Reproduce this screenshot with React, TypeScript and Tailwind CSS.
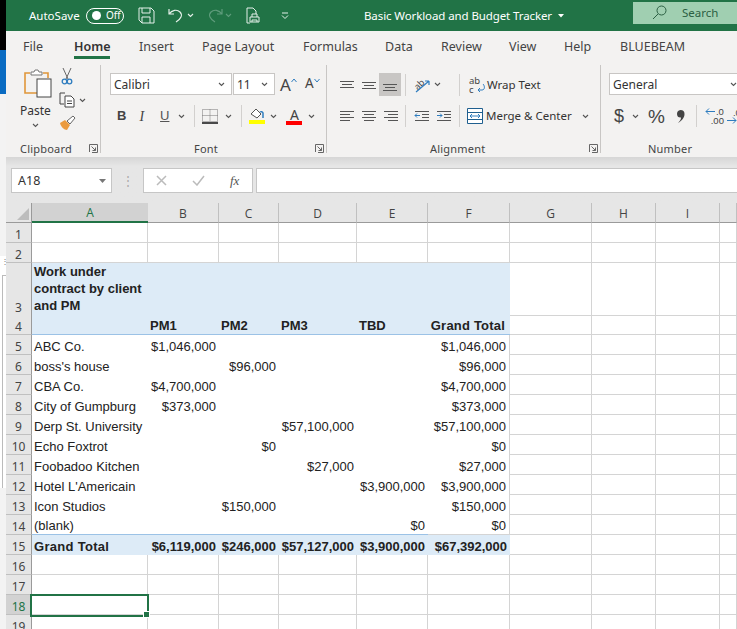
import React from "react";

/* ================= SHEET DATA ================= */

const columns = ["A", "B", "C", "D", "E", "F", "G", "H", "I", ""];

type Row = { n: number; cells: string[]; bold?: boolean };

const rows: Row[] = [
  { n: 5, cells: ["ABC Co.", "$1,046,000", "", "", "", "$1,046,000"] },
  { n: 6, cells: ["boss's house", "", "$96,000", "", "", "$96,000"] },
  { n: 7, cells: ["CBA Co.", "$4,700,000", "", "", "", "$4,700,000"] },
  { n: 8, cells: ["City of Gumpburg", "$373,000", "", "", "", "$373,000"] },
  { n: 9, cells: ["Derp St. University", "", "", "$57,100,000", "", "$57,100,000"] },
  { n: 10, cells: ["Echo Foxtrot", "", "$0", "", "", "$0"] },
  { n: 11, cells: ["Foobadoo Kitchen", "", "", "$27,000", "", "$27,000"] },
  { n: 12, cells: ["Hotel L'Americain", "", "", "", "$3,900,000", "$3,900,000"] },
  { n: 13, cells: ["Icon Studios", "", "$150,000", "", "", "$150,000"] },
  { n: 14, cells: ["(blank)", "", "", "", "$0", "$0"] },
];

const tabs = [
  { label: "File", w: "w-[51px]" },
  { label: "Home", w: "w-[65px]" },
  { label: "Insert", w: "w-[63px]" },
  { label: "Page Layout", w: "w-[101px]" },
  { label: "Formulas", w: "w-[82px]" },
  { label: "Data", w: "w-[56px]" },
  { label: "Review", w: "w-[68px]" },
  { label: "View", w: "w-[55px]" },
  { label: "Help", w: "w-[56px]" },
  { label: "BLUEBEAM", w: "w-[80px]" },
];

const sheetGrid = "grid grid-cols-[26px_116px_71px_60px_78px_71px_82px_82px_64px_64px_17px]";
const gridLine = "border-r border-b border-[#d4d4d4]";

/* ================= SMALL ICONS ================= */

function Chev({ className = "", color = "#555" }: { className?: string; color?: string }) {
  return (
    <svg width="7" height="5" viewBox="0 0 7 5" className={`shrink-0 ${className}`}>
      <path d="M1 1l2.5 2.5L6 1" fill="none" stroke={color} strokeWidth="1.1" />
    </svg>
  );
}

function Lines({ rows, arrow }: { rows: number[][]; arrow?: React.ReactNode }) {
  return (
    <svg width="16" height="14" viewBox="0 0 16 14" className="shrink-0">
      {rows.map((r, i) => (
        <line key={i} x1={r[0]} x2={r[1]} y1={r[2] + 0.5} y2={r[2] + 0.5} stroke="#555" />
      ))}
      {arrow}
    </svg>
  );
}

function Launcher({ className = "" }: { className?: string }) {
  return (
    <svg width="9" height="9" viewBox="0 0 9 9" className={`shrink-0 ${className}`}>
      <path d="M.5 8V.5H8.500V8.500H3" fill="none" stroke="#666" />
      <path d="M2.500 2.500L6.500 6.500M6.500 3.500V6.500H3.500" fill="none" stroke="#666" />
    </svg>
  );
}

function Sep({ className = "" }: { className?: string }) {
  return <div className={`w-px h-[22px] bg-[#d2d0ce] shrink-0 ${className}`} />;
}

function Combo({ label, w }: { label: string; w: string }) {
  return (
    <div className={`h-[22px] bg-white border border-[#c8c6c4] flex items-center justify-between pl-[3px] pr-[6px] pt-[1px] text-[12px] text-[#333] shrink-0 ${w}`}>
      <span>{label}</span>
      <Chev />
    </div>
  );
}

function GroupLabel({ label, className = "" }: { label: string; className?: string }) {
  return <span className={`text-[11px] leading-[8px] tracking-[0.2px] whitespace-nowrap text-[#444] ${className}`}>{label}</span>;
}

/* ================= APP ================= */

export default function App() {
  return (
    <div className="w-[737px] h-[629px] overflow-hidden flex bg-white font-['Noto_Sans',sans-serif] text-[#333]">

      {/* the window behind, just a sliver of it */}
      <div className="w-[6px] shrink-0 flex flex-col">
        <div className="h-[50px] bg-black" />
        <div className="h-[44px] bg-[#0a6bc2]" />
        <div className="h-[162px] bg-[#f3f3f3]" />
        <div className="h-[19px] bg-white text-[8px] leading-[7px] text-[#777] pl-[1px] pt-[1px]">⋮</div>
        <div className="h-[213px] bg-white border-t border-l border-[#bbb] ml-[2px]" />
        <div className="flex-1 bg-[#f3f3f3]" />
      </div>

      <div className="w-[731px] shrink-0 flex flex-col">

        {/* TITLE BAR */}
        <div className="h-[31px] bg-[#217346] flex items-center text-white shrink-0 pl-[23px]">
          <span className="text-[11.500px] w-[57px] shrink-0">AutoSave</span>
          <div className="w-[38px] h-[16px] rounded-full border border-white flex items-center pl-[5px] gap-[5px] shrink-0">
            <div className="w-[9px] h-[9px] rounded-full bg-white" />
            <span className="text-[10px]">Off</span>
          </div>
          <svg width="17" height="17" viewBox="0 0 17 17" className="ml-[14px] shrink-0">
            <path d="M1 1h12l3 3v12H4l-3-3z M4 1v5h8V1 M4 16v-6h8v6" fill="none" stroke="#e4f0e9" />
          </svg>
          <svg width="16" height="15" viewBox="0 0 16 15" className="ml-[13px] shrink-0">
            <path d="M1 1v5h5 M1 6c3-4 8-5 11-2s1 7-4 10" fill="none" stroke="#e4f0e9" strokeWidth="1.2" />
          </svg>
          <Chev className="ml-[3px]" color="#e4f0e9" />
          <svg width="16" height="15" viewBox="0 0 16 15" className="ml-[13px] shrink-0">
            <path d="M15 1v5h-5 M15 6c-3-4-8-5-11-2s-1 7 4 10" fill="none" stroke="#5f9c7c" strokeWidth="1.2" />
          </svg>
          <Chev className="ml-[2px]" color="#5f9c7c" />
          <svg width="15" height="17" viewBox="0 0 15 17" className="ml-[14px] shrink-0">
            <path d="M1 1h6l3 3v3 M1 1v15h3 M4 10h9v5H4z M6 10V7h5v3 M6 15v-2h5v2" fill="none" stroke="#e4f0e9" />
          </svg>
          <svg width="8" height="8" viewBox="0 0 8 8" className="ml-[20px] shrink-0">
            <path d="M1 1h6M1 3.500L4 6.500l3-3" fill="none" stroke="#e4f0e9" />
          </svg>
          <span className="text-[11.500px] ml-[75px] w-[185px] shrink-0 tracking-[-0.1px] whitespace-nowrap">Basic Workload and Budget Tracker</span>
          <svg width="6" height="4" viewBox="0 0 6 4" className="ml-[9px] shrink-0">
            <path d="M0 0h6L3 3.500z" fill="#fff" />
          </svg>
          <div className="ml-[69px] w-[104px] h-[22px] mb-[6px] bg-[#a0cfb1] flex items-center text-[#2b5f43] text-[11.500px] shrink-0">
            <svg width="15" height="15" viewBox="0 0 15 15" className="ml-[19px] shrink-0">
              <circle cx="9.500" cy="5.500" r="4.500" fill="none" stroke="#2b5f43" />
              <path d="M6 9l-5 5" stroke="#2b5f43" />
            </svg>
            <span className="ml-[15px]">Search</span>
          </div>
        </div>

        {/* TABS */}
        <div className="h-[31px] bg-[#f3f2f1] flex items-start pl-[17px] pt-[2px] text-[12.500px] text-[#444] shrink-0">
          {tabs.map((t) => (
            <div key={t.label} className={`${t.w} h-[28px] shrink-0 flex flex-col justify-center`}>
              <div className="relative w-fit">
                <span className={t.label === "Home" ? "font-semibold text-[#333]" : ""}>{t.label}</span>
                {t.label === "Home" && <div className="absolute left-0 right-0 -bottom-[3px] h-[3px] bg-[#217346]" />}
              </div>
            </div>
          ))}
        </div>

        {/* RIBBON */}
        <div className="h-[95px] bg-[#f3f2f1] flex shrink-0">

          {/* Clipboard */}
          <div className="w-[95px] h-[88px] mt-[3px] border-r border-[#c8c6c4] flex flex-col shrink-0">
            <div className="flex flex-1">
              <div className="w-[52px] pl-[18px] pt-[4px] flex flex-col items-start">
                <svg width="28" height="30" viewBox="0 0 28 30">
                  <path d="M13 24H1V4h5M19 4h5v5" fill="none" stroke="#e0963a" strokeWidth="1.600" />
                  <path d="M7 6V3h3l1-2h3l1 2h3v3z" fill="#fff" stroke="#777" />
                  <rect x="13" y="10" width="14" height="18" fill="#fff" stroke="#444" />
                </svg>
                <span className="text-[12px] -ml-[4px] mt-[3px]">Paste</span>
                <Chev className="ml-[8px] mt-[3px]" />
              </div>
              <div className="flex flex-col pl-[1px] pt-[2px] gap-[7px]">
                <svg width="12" height="18" viewBox="0 0 12 18" className="ml-[2px]">
                  <path d="M2 1l5 11M10 1L5 12" stroke="#666" fill="none" />
                  <circle cx="3.500" cy="14.500" r="2.300" fill="none" stroke="#2f7dbf" strokeWidth="1.300" />
                  <circle cx="8.500" cy="14.500" r="2.300" fill="none" stroke="#2f7dbf" strokeWidth="1.300" />
                </svg>
                <div className="flex items-center gap-[3px]">
                  <svg width="17" height="16" viewBox="0 0 17 16">
                    <path d="M6 1H1v11h4" fill="none" stroke="#444" />
                    <path d="M6 4h6l3 3v8H6z M8 9h5M8 11.500h5" fill="#fff" stroke="#444" />
                  </svg>
                  <Chev />
                </div>
                <svg width="17" height="16" viewBox="0 0 17 16">
                  <path d="M1 8l5-3 5 5-3 5C5 15 2 12 1 8z" fill="#eb9b3f" />
                  <path d="M8 6l6-5 2 2-5 6z" fill="#fff" stroke="#666" />
                </svg>
              </div>
            </div>
            <div className="h-[14px] flex items-end pl-[14px] justify-between pr-[2px]">
              <GroupLabel label="Clipboard" />
              <Launcher />
            </div>
          </div>

          {/* Font */}
          <div className="w-[226px] h-[88px] mt-[3px] border-r border-[#c8c6c4] flex flex-col shrink-0 pl-[9px]">
            <div className="flex items-center h-[22px] mt-[8px]">
              <Combo label="Calibri" w="w-[122px]" />
              <Combo label="11" w="w-[42px] ml-[1px]" />
              <span className="text-[17px] ml-[5px] text-[#444] leading-none">A</span>
              <svg width="6" height="5" viewBox="0 0 6 5" className="mb-[8px]"><path d="M.5 4L3 1l2.500 3" fill="none" stroke="#2f7dbf" /></svg>
              <span className="text-[13.500px] ml-[8px] text-[#444] leading-none">A</span>
              <svg width="6" height="5" viewBox="0 0 6 5" className="mb-[8px]"><path d="M.5 1L3 4l2.500-3" fill="none" stroke="#2f7dbf" /></svg>
            </div>
            <div className="flex items-center h-[22px] mt-[10px]">
              <span className="font-['Liberation_Sans',sans-serif] font-bold text-[13px] ml-[7px] text-[#444]">B</span>
              <span className="font-['Liberation_Serif',serif] italic text-[14px] ml-[13px] text-[#444]">I</span>
              <span className="font-['Liberation_Sans',sans-serif] text-[13px] underline ml-[16px] text-[#555]">U</span>
              <Chev className="ml-[9px]" />
              <Sep className="ml-[9px]" />
              <svg width="16" height="15" viewBox="0 0 16 15" className="ml-[7px] shrink-0">
                <path d="M.5 .5h15v12H.5z M8 .5v12M.5 6.500h15" fill="none" stroke="#777" strokeDasharray="1 1" />
                <path d="M0 14h16" stroke="#111" strokeWidth="1.500" />
              </svg>
              <Chev className="ml-[7px]" />
              <Sep className="ml-[9px]" />
              <div className="flex flex-col ml-[7px] w-[16px] shrink-0">
                <svg width="16" height="12" viewBox="0 0 16 12">
                  <path d="M2 6l5-5 5 5-4 4z" fill="#fff" stroke="#555" />
                  <path d="M14 10V5a2 2 0 0 0-3-1" fill="none" stroke="#2f7dbf" strokeWidth="1.500" />
                </svg>
                <div className="h-[4px] bg-[#ffff00]" />
              </div>
              <Chev className="ml-[5px]" />
              <div className="flex flex-col items-center ml-[9px] w-[16px] shrink-0">
                <span className="text-[14px] leading-[13px] text-[#444]">A</span>
                <div className="h-[4px] w-full bg-[#ff0000]" />
              </div>
              <Chev className="ml-[6px]" />
            </div>
            <div className="flex-1 flex items-end pr-[2px]">
              <GroupLabel label="Font" className="ml-[84px]" />
              <Launcher className="ml-auto" />
            </div>
          </div>

          {/* Alignment */}
          <div className="w-[274px] h-[88px] mt-[3px] border-r border-[#c8c6c4] flex flex-col shrink-0 pl-[12px]">
            <div className="flex items-center h-[23px] mt-[8px]">
              <Lines rows={[[1, 15, 3], [3, 13, 6], [1, 15, 9]]} />
              <div className="w-[6px]" />
              <Lines rows={[[1, 15, 4], [3, 13, 7], [1, 15, 10]]} />
              <div className="ml-[2px] w-[22px] h-[23px] bg-[#c8c6c4] flex items-center justify-center shrink-0">
                <Lines rows={[[1, 15, 6], [3, 13, 9], [1, 15, 12]]} />
              </div>
              <Sep className="ml-[4px]" />
              <span className="relative ml-[7px] w-[18px] h-[18px] shrink-0 block">
                <span className="block text-[9px] leading-[12px] -rotate-45 text-[#444]">ab</span>
                <svg width="18" height="18" viewBox="0 0 18 18" className="absolute left-0 top-0">
                  <path d="M3 16L16 5M16 5h-4M16 5v4" fill="none" stroke="#2f7dbf" strokeWidth="1.200" />
                </svg>
              </span>
              <Chev className="ml-[3px]" />
              <Sep className="ml-[18px]" />
              <span className="ml-[9px] w-[9px] text-[9.500px] leading-[9px] text-[#444] shrink-0">
                ab
                <br />
                c
              </span>
              <svg width="8" height="9" viewBox="0 0 8 9" className="mt-[7px] -ml-[1px] shrink-0">
                <path d="M6 0c2 2 2 6-1 6H1M3 4L1 6l2 2" fill="none" stroke="#2f7dbf" />
              </svg>
              <span className="ml-[2px] text-[11.500px] whitespace-nowrap">Wrap Text</span>
            </div>
            <div className="flex items-center h-[22px] mt-[9px]">
              <Lines rows={[[1, 15, 2], [1, 11, 5], [1, 15, 8], [1, 11, 11]]} />
              <div className="w-[6px]" />
              <Lines rows={[[1, 15, 2], [3, 13, 5], [1, 15, 8], [3, 13, 11]]} />
              <div className="w-[6px]" />
              <Lines rows={[[1, 15, 2], [5, 15, 5], [1, 15, 8], [5, 15, 11]]} />
              <Sep className="ml-[6px]" />
              <div className="ml-[8px]">
                <Lines
                  rows={[[1, 15, 2], [8, 15, 5], [8, 15, 8], [1, 15, 11]]}
                  arrow={<path d="M6 6.500H1M3 4.500L1 6.500l2 2" fill="none" stroke="#2f7dbf" />}
                />
              </div>
              <div className="ml-[6px]">
                <Lines
                  rows={[[1, 15, 2], [8, 15, 5], [8, 15, 8], [1, 15, 11]]}
                  arrow={<path d="M1 6.500h5M4 4.500l2 2-2 2" fill="none" stroke="#2f7dbf" />}
                />
              </div>
              <Sep className="ml-[7px]" />
              <svg width="16" height="16" viewBox="0 0 16 16" className="ml-[7px] shrink-0">
                <path d="M.5 .5h15v15H.5z M.5 4.500h15M.5 11.500h15" fill="#fff" stroke="#1f5f8f" />
                <path d="M3 8h10M5 6L3 8l2 2M11 6l2 2-2 2" fill="none" stroke="#2f7dbf" />
              </svg>
              <span className="ml-[3px] text-[11.500px] whitespace-nowrap">Merge &amp; Center</span>
              <Chev className="ml-[10px]" />
            </div>
            <div className="flex-1 flex items-end pr-[2px]">
              <GroupLabel label="Alignment" className="ml-[91px]" />
              <Launcher className="ml-auto" />
            </div>
          </div>

          {/* Number */}
          <div className="flex-1 h-[88px] mt-[3px] flex flex-col pl-[8px] overflow-hidden">
            <div className="mt-[8px] flex">
              <Combo label="General" w="w-[135px]" />
            </div>
            <div className="flex items-center h-[22px] mt-[10px] text-[#444]">
              <span className="text-[18px] ml-[5px] font-['Liberation_Sans',sans-serif] leading-none">$</span>
              <Chev className="ml-[8px]" />
              <span className="text-[19px] ml-[9px] font-['Liberation_Sans',sans-serif] leading-none">%</span>
              <svg width="9" height="13" viewBox="0 0 9 13" className="ml-[11px] shrink-0">
                <path d="M4.500 0a4 4 0 0 1 4 4c0 4-3 7-6.500 9 2-2 3-3.500 3-5.500a3.700 3.700 0 0 1-4-3.500A4 4 0 0 1 4.500 0z" fill="#444" />
              </svg>
              <Sep className="ml-[11px]" />
              <div className="ml-[7px] w-[20px] shrink-0 flex flex-col items-end text-[9.500px] leading-[9px] font-['Liberation_Sans',sans-serif]">
                <div className="flex items-center">
                  <svg width="10" height="7" viewBox="0 0 10 7" className="mr-[1px]"><path d="M10 3.500H1M4 .5L1 3.500l3 3" fill="none" stroke="#2f7dbf" /></svg>
                  <span>.0</span>
                </div>
                <span>.00</span>
              </div>
              <div className="ml-[3px] shrink-0 flex flex-col text-[9.500px] leading-[9px] font-['Liberation_Sans',sans-serif]">
                <span className="pl-[6px]">.00</span>
                <div className="flex items-center">
                  <svg width="10" height="7" viewBox="0 0 10 7"><path d="M0 3.500h9M6 .5l3 3-3 3" fill="none" stroke="#2f7dbf" /></svg>
                </div>
              </div>
            </div>
            <div className="flex-1 flex items-end">
              <GroupLabel label="Number" className="ml-[39px]" />
            </div>
          </div>
        </div>

        {/* FORMULA BAR */}
        <div className="h-[46px] shrink-0 bg-linear-to-b from-[#d6d6d6] to-[#e6e6e6] to-[20%] flex items-start pt-[11px] pl-[5px]">
          <div className="w-[101px] h-[25px] bg-white border border-[#c6c6c6] flex items-center justify-between pl-[6px] pr-[5px] pt-[1px] text-[12.500px] shrink-0">
            <span>A18</span>
            <svg width="7" height="4" viewBox="0 0 7 4"><path d="M0 0h7L3.500 4z" fill="#777" /></svg>
          </div>
          <div className="w-[31px] h-[25px] flex items-center justify-center text-[#aaa] text-[12px] shrink-0">⋮</div>
          <div className="w-[110px] h-[25px] bg-white border border-[#c6c6c6] flex items-center shrink-0">
            <svg width="11" height="11" viewBox="0 0 11 11" className="ml-[12px]">
              <path d="M1 1l9 9M10 1l-9 9" stroke="#bbb" strokeWidth="1.500" />
            </svg>
            <svg width="13" height="11" viewBox="0 0 13 11" className="ml-[25px]">
              <path d="M1 6l4 4 7-9" fill="none" stroke="#bbb" strokeWidth="1.500" />
            </svg>
            <span className="ml-[25px] font-['Liberation_Serif',serif] italic text-[13px] text-[#555]">fx</span>
          </div>
          <div className="flex-1 h-[25px] ml-[3px] bg-white border border-[#c6c6c6] border-r-0" />
        </div>

        {/* SHEET */}
        <div className="flex-1 font-['Liberation_Sans',sans-serif] text-[13px] leading-[15px] text-[#222] overflow-hidden">

          {/* column headers */}
          <div className={`${sheetGrid} h-[20px]`}>
            <div className="bg-[#e6e6e6] border-r border-b border-[#9a9a9a] flex items-end justify-end p-[2px]">
              <svg width="12" height="12" viewBox="0 0 12 12"><path d="M12 0v12H0z" fill="#bdbdbd" /></svg>
            </div>
            {columns.map((c, i) => (
              <div
                key={i}
                className={
                  i === 0
                    ? "bg-[#d2d2d2] border-b-2 border-[#217346] flex items-center justify-center pt-[1px] font-['Open_Sans',sans-serif] text-[12px] text-[#217346]"
                    : "bg-[#e6e6e6] border-r border-b border-r-[#c0c0c0] border-b-[#9a9a9a] flex items-center justify-center pt-[1px] font-['Open_Sans',sans-serif] text-[12px] text-[#444]"
                }
              >
                {c}
              </div>
            ))}
          </div>

          {/* rows 1 and 2, plain */}
          {[1, 2].map((n) => (
            <div key={n} className={`${sheetGrid} h-[20px]`}>
              <RowHead n={n} />
              {columns.map((c, i) => (
                <div key={i} className={gridLine} />
              ))}
            </div>
          ))}

          {/* row 3, the wrapped heading */}
          <div className={`${sheetGrid} h-[52px]`}>
            <RowHead n={3} />
            <div className="col-span-6 bg-[#ddebf7] font-bold leading-[17px] pl-[2px] flex items-end">
              <span className="w-[115px] pb-[2px]">Work under contract by client and PM</span>
            </div>
            {columns.slice(6).map((c, i) => (
              <div key={i} className={gridLine} />
            ))}
          </div>

          {/* row 4, pivot header */}
          <div className={`${sheetGrid} h-[20px]`}>
            <RowHead n={4} />
            <div className="bg-[#ddebf7] border-b border-[#9bc2e6]" />
            {["PM1", "PM2", "PM3", "TBD"].map((h) => (
              <div key={h} className="bg-[#ddebf7] border-b border-[#9bc2e6] font-bold pl-[2px] pt-[2px] flex items-center">{h}</div>
            ))}
            <div className="bg-[#ddebf7] border-b border-[#9bc2e6] font-bold pr-[5px] pt-[2px] tracking-[0.2px] flex items-center justify-end">Grand Total</div>
            {columns.slice(6).map((c, i) => (
              <div key={i} className={gridLine} />
            ))}
          </div>

          {/* pivot body */}
          {rows.map((r) => (
            <div key={r.n} className={`${sheetGrid} h-[20px]`}>
              <RowHead n={r.n} />
              {r.cells.map((v, i) => (
                <div
                  key={i}
                  className={`flex items-center whitespace-nowrap pt-[2px] ${i === 0 ? "pl-[2px]" : "justify-end pr-[3px]"} ${r.n === 14 ? "border-b border-[#9bc2e6]" : ""} ${i === 5 ? "border-r border-[#d4d4d4]" : ""}`}
                >
                  {v}
                </div>
              ))}
              {columns.slice(6).map((c, i) => (
                <div key={i} className={gridLine} />
              ))}
            </div>
          ))}

          {/* grand total */}
          <div className={`${sheetGrid} h-[20px]`}>
            <RowHead n={15} />
            {["Grand Total", "$6,119,000", "$246,000", "$57,127,000", "$3,900,000", "$67,392,000"].map((v, i) => (
              <div key={i} className={`bg-[#ddebf7] font-bold flex items-center whitespace-nowrap pt-[2px] ${i === 0 ? "pl-[2px] tracking-[0.3px]" : "justify-end pr-[3px]"}`}>
                {v}
              </div>
            ))}
            {columns.slice(6).map((c, i) => (
              <div key={i} className={gridLine} />
            ))}
          </div>

          {/* empty rows below */}
          {[16, 17, 18, 19].map((n) => (
            <div key={n} className={`${sheetGrid} h-[20px]`}>
              <RowHead n={n} active={n === 18} />
              {columns.map((c, i) => (
                <div key={i} className={`${gridLine} relative`}>
                  {n === 18 && i === 0 && (
                    <div className="absolute -left-[2px] -top-px w-[119px] h-[23px] border-2 border-[#217346] z-10">
                      <div className="absolute -right-[3px] -bottom-[3px] w-[5px] h-[5px] bg-[#217346] border border-white box-content" />
                    </div>
                  )}
                </div>
              ))}
            </div>
          ))}
        </div>
      </div>
    </div>
  );
}

function RowHead({ n, active }: { n: number; active?: boolean }) {
  return (
    <div
      className={`flex items-end justify-center border-r border-b border-r-[#9a9a9a] border-b-[#c0c0c0] font-['Noto_Sans',sans-serif] text-[12px] leading-[14px] ${active ? "bg-[#d2d2d2] text-[#217346]" : "bg-[#e6e6e6] text-[#444]"}`}
    >
      {n}
    </div>
  );
}
